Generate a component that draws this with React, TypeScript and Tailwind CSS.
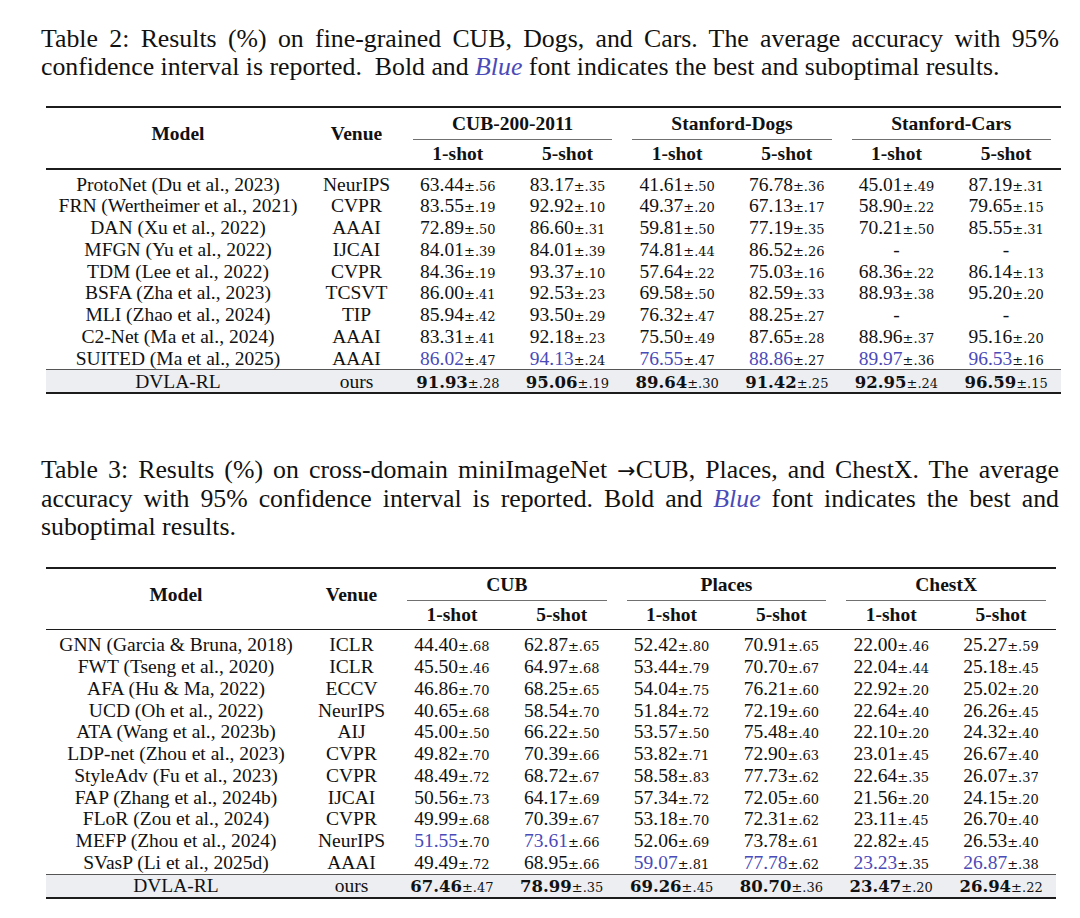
import React from "react";

type Row = { model: string; venue: string; cells: string[] };

const t2: Row[] = [
  { model: "ProtoNet (Du et al., 2023)", venue: "NeurIPS", cells: ["63.44 .56", "83.17 .35", "41.61 .50", "76.78 .36", "45.01 .49", "87.19 .31"] },
  { model: "FRN (Wertheimer et al., 2021)", venue: "CVPR", cells: ["83.55 .19", "92.92 .10", "49.37 .20", "67.13 .17", "58.90 .22", "79.65 .15"] },
  { model: "DAN (Xu et al., 2022)", venue: "AAAI", cells: ["72.89 .50", "86.60 .31", "59.81 .50", "77.19 .35", "70.21 .50", "85.55 .31"] },
  { model: "MFGN (Yu et al., 2022)", venue: "IJCAI", cells: ["84.01 .39", "84.01 .39", "74.81 .44", "86.52 .26", "-", "-"] },
  { model: "TDM (Lee et al., 2022)", venue: "CVPR", cells: ["84.36 .19", "93.37 .10", "57.64 .22", "75.03 .16", "68.36 .22", "86.14 .13"] },
  { model: "BSFA (Zha et al., 2023)", venue: "TCSVT", cells: ["86.00 .41", "92.53 .23", "69.58 .50", "82.59 .33", "88.93 .38", "95.20 .20"] },
  { model: "MLI (Zhao et al., 2024)", venue: "TIP", cells: ["85.94 .42", "93.50 .29", "76.32 .47", "88.25 .27", "-", "-"] },
  { model: "C2-Net (Ma et al., 2024)", venue: "AAAI", cells: ["83.31 .41", "92.18 .23", "75.50 .49", "87.65 .28", "88.96 .37", "95.16 .20"] },
  { model: "SUITED (Ma et al., 2025)", venue: "AAAI", cells: ["b86.02 .47", "b94.13 .24", "b76.55 .47", "b88.86 .27", "b89.97 .36", "b96.53 .16"] },
];
const t2last: Row = { model: "DVLA-RL", venue: "ours", cells: ["*91.93 .28", "*95.06 .19", "*89.64 .30", "*91.42 .25", "*92.95 .24", "*96.59 .15"] };

const t3: Row[] = [
  { model: "GNN (Garcia & Bruna, 2018)", venue: "ICLR", cells: ["44.40 .68", "62.87 .65", "52.42 .80", "70.91 .65", "22.00 .46", "25.27 .59"] },
  { model: "FWT (Tseng et al., 2020)", venue: "ICLR", cells: ["45.50 .46", "64.97 .68", "53.44 .79", "70.70 .67", "22.04 .44", "25.18 .45"] },
  { model: "AFA (Hu & Ma, 2022)", venue: "ECCV", cells: ["46.86 .70", "68.25 .65", "54.04 .75", "76.21 .60", "22.92 .20", "25.02 .20"] },
  { model: "UCD (Oh et al., 2022)", venue: "NeurIPS", cells: ["40.65 .68", "58.54 .70", "51.84 .72", "72.19 .60", "22.64 .40", "26.26 .45"] },
  { model: "ATA (Wang et al., 2023b)", venue: "AIJ", cells: ["45.00 .50", "66.22 .50", "53.57 .50", "75.48 .40", "22.10 .20", "24.32 .40"] },
  { model: "LDP-net (Zhou et al., 2023)", venue: "CVPR", cells: ["49.82 .70", "70.39 .66", "53.82 .71", "72.90 .63", "23.01 .45", "26.67 .40"] },
  { model: "StyleAdv (Fu et al., 2023)", venue: "CVPR", cells: ["48.49 .72", "68.72 .67", "58.58 .83", "77.73 .62", "22.64 .35", "26.07 .37"] },
  { model: "FAP (Zhang et al., 2024b)", venue: "IJCAI", cells: ["50.56 .73", "64.17 .69", "57.34 .72", "72.05 .60", "21.56 .20", "24.15 .20"] },
  { model: "FLoR (Zou et al., 2024)", venue: "CVPR", cells: ["49.99 .68", "70.39 .67", "53.18 .70", "72.31 .62", "23.11 .45", "26.70 .40"] },
  { model: "MEFP (Zhou et al., 2024)", venue: "NeurIPS", cells: ["b51.55 .70", "b73.61 .66", "52.06 .69", "73.78 .61", "22.82 .45", "26.53 .40"] },
  { model: "SVasP (Li et al., 2025d)", venue: "AAAI", cells: ["49.49 .72", "68.95 .66", "b59.07 .81", "b77.78 .62", "b23.23 .35", "b26.87 .38"] },
];
const t3last: Row = { model: "DVLA-RL", venue: "ours", cells: ["*67.46 .47", "*78.99 .35", "*69.26 .45", "*80.70 .36", "*23.47 .20", "*26.94 .22"] };

function Num({ v }: { v: string }) {
  if (v === "-") return <span>-</span>;
  let kind = 0;
  let s = v;
  if (s[0] === "b") {
    kind = 1;
    s = s.slice(1);
  } else if (s[0] === "*") {
    kind = 2;
    s = s.slice(1);
  }
  const [m, sub] = s.split(" ");
  return (
    <span className="whitespace-nowrap">
      <span
        className={
          kind === 1
            ? "text-[#4a4ab8]"
            : kind === 2
            ? "font-['DejaVu_Serif',serif] font-bold text-[16.5px]"
            : ""
        }
      >
        {m}
      </span>
      <span className="font-['DejaVu_Serif',serif] text-[13px]">±{sub}</span>
    </span>
  );
}

function Table({
  cols,
  groups,
  rows,
  last,
}: {
  cols: string;
  groups: string[];
  rows: Row[];
  last: Row;
}) {
  return (
    <div className="text-[19.5px] leading-none">
      <div className="h-[2px] bg-[#1c1c1c]" />
      <div className={`grid ${cols} grid-rows-[32px_28px]`}>
        <div className="row-span-2 flex items-center justify-center pb-[8px] font-bold">Model</div>
        <div className="row-span-2 flex items-center justify-center pb-[8px] font-bold">Venue</div>
        {groups.map((g) => (
          <div key={g} className="col-span-2 flex flex-col">
            <div className="flex flex-1 items-center justify-center font-bold">{g}</div>
            <div className="mx-[10px] h-px bg-[#707070]" />
          </div>
        ))}
        {["1-shot", "5-shot", "1-shot", "5-shot", "1-shot", "5-shot"].map((s, i) => (
          <div key={i} className="flex items-center justify-center font-bold">
            {s}
          </div>
        ))}
      </div>
      <div className="h-[1.5px] bg-[#1c1c1c]" />
      <div className="pt-[4px]">
        {rows.map((r) => (
          <div key={r.model} className={`grid ${cols} h-[21.75px] items-center text-center`}>
            <div className="whitespace-nowrap">{r.model}</div>
            <div>{r.venue}</div>
            {r.cells.map((c, i) => (
              <div key={i}>
                <Num v={c} />
              </div>
            ))}
          </div>
        ))}
      </div>
      <div className="h-px bg-[#555]" />
      <div className={`grid ${cols} h-[22px] items-center bg-[#eceef1] text-center`}>
        <div>{last.model}</div>
        <div>{last.venue}</div>
        {last.cells.map((c, i) => (
          <div key={i}>
            <Num v={c} />
          </div>
        ))}
      </div>
      <div className="h-[2px] bg-[#1c1c1c]" />
    </div>
  );
}

function Line({ children, last }: { children: React.ReactNode; last?: boolean }) {
  return (
    <div className={last ? "whitespace-nowrap text-left" : "whitespace-nowrap text-justify [text-align-last:justify]"}>
      {children}
    </div>
  );
}

function Blue() {
  return <span className="italic text-[#4a4ab8]">Blue</span>;
}

export default function App() {
  return (
    <div className="h-[918px] w-[1080px] overflow-hidden bg-white font-['Liberation_Serif',serif] text-[#111]">
      <div className="ml-[41px] mt-[25px] w-[1018px] text-[25.8px] leading-[27.5px]">
        <Line>Table 2: Results (%) on fine-grained CUB, Dogs, and Cars. The average accuracy with 95%</Line>
        <Line last>
          confidence interval is reported.&nbsp; Bold and <Blue /> font indicates the best and suboptimal results.
        </Line>
      </div>
      <div className="ml-[46px] mt-[26px] w-[1015px]">
        <Table
          cols="grid-cols-[264px_93px_repeat(6,109.67px)]"
          groups={["CUB-200-2011", "Stanford-Dogs", "Stanford-Cars"]}
          rows={t2}
          last={t2last}
        />
      </div>
      <div className="ml-[41px] mt-[62px] w-[1018px] text-[25.8px] leading-[28px]">
        <Line>
          Table 3: Results (%) on cross-domain miniImageNet{" "}
          <span className="font-['DejaVu_Sans',sans-serif] text-[22px]">→</span>CUB, Places, and ChestX. The average
        </Line>
        <Line>
          accuracy with 95% confidence interval is reported. Bold and <Blue /> font indicates the best and
        </Line>
        <Line last>suboptimal results.</Line>
      </div>
      <div className="ml-[46px] mt-[25.5px] w-[1010px]">
        <Table
          cols="grid-cols-[260px_91px_repeat(6,109.83px)]"
          groups={["CUB", "Places", "ChestX"]}
          rows={t3}
          last={t3last}
        />
      </div>
    </div>
  );
}
